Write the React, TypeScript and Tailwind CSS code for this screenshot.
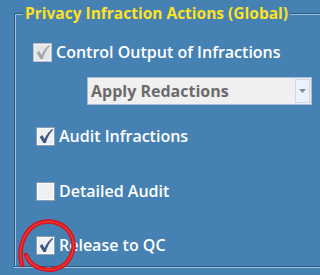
import * as React from "react";

const font = { fontFamily: '"Open Sans", "DejaVu Sans", sans-serif' };

interface CheckProps {
  checked: boolean;
  disabled?: boolean;
}

const CheckBox: React.FC<CheckProps> = ({ checked, disabled }) => {
  return (
    <div
      className={
        "w-[19px] h-[19px] shrink-0 border flex items-center justify-center " +
        (disabled
          ? "border-[#b9c2cc] bg-[#e4e6e8] shadow-[inset_0_0_0_1px_#f4f4f4]"
          : "border-[#8c9db2] bg-[#eef0f3] shadow-[inset_0_0_0_1px_#fbfbfb]")
      }
    >
      {checked && (
        <svg width="16" height="16" viewBox="0 0 15 15">
          <path
            d="M1.6 8.4 L4 6.6 L6.1 10.2 C8 6 10.5 3 13.8 0.8 L14.2 1.7 C11.3 4.6 8.9 8.6 7.3 14 L5.1 14 Z"
            fill={disabled ? "#a3a6aa" : "#3d5580"}
          />
        </svg>
      )}
    </div>
  );
};

interface RowProps {
  label: string;
  checked: boolean;
  disabled?: boolean;
  className?: string;
}

const CheckRow: React.FC<RowProps> = ({ label, checked, disabled, className }) => {
  return (
    <div className={"flex items-center gap-[4px] " + (className || "")}>
      <CheckBox checked={checked} disabled={disabled} />
      <span className="text-white font-semibold text-[16px] leading-[20px]">{label}</span>
    </div>
  );
};

export default function App() {
  return (
    <div
      className="relative w-[320px] h-[275px] overflow-hidden bg-[#4681b4]"
      style={font}
    >
      <fieldset className="ml-[14px] w-[330px] h-[267px] border border-r-0 border-[#2c5a85] shadow-[inset_1px_1px_0_#9fc0de,0_1px_0_#9fc0de] pl-[8px]">
        <legend className="px-[2px] bg-[#4681b4] text-[#ffe21f] font-bold text-[15.5px] leading-[26px]">
          Privacy Infraction Actions (Global)
        </legend>
        <div className="flex flex-col">
          <CheckRow
            label="Control Output of Infractions"
            checked
            disabled
            className="mt-[16px] ml-[10px]"
          />
          <div className="mt-[15px] ml-[64px] w-[225px] h-[28px] bg-[#f0f0f0] border border-[#a7bcd4] flex items-center pl-[3px] pr-[1px]">
            <span className="flex-1 text-[#6b6b6b] font-bold text-[16px] leading-[20px]">
              Apply Redactions
            </span>
            <div className="w-[15px] h-[24px] bg-[#eaf2fb] border border-[#c9d9ea] flex items-center justify-center">
              <svg width="7" height="4" viewBox="0 0 7 4">
                <path d="M0 0 H7 L3.5 4 Z" fill="#8a8a8a" />
              </svg>
            </div>
          </div>
          <CheckRow label="Audit Infractions" checked className="mt-[21px] ml-[13px]" />
          <CheckRow label="Detailed Audit" checked={false} className="mt-[35px] ml-[13px]" />
          <CheckRow label="Release to QC" checked className="mt-[34px] ml-[13px]" />
        </div>
      </fieldset>
      <svg
        className="absolute left-0 top-0 pointer-events-none"
        width="320"
        height="275"
        viewBox="0 0 320 275"
      >
        <path
          d="M22 265 C18 252, 22 233, 35 225 C48 218, 66 222, 72 237 C77 250, 69 266, 55 269 C43 272, 30 266, 26 255"
          fill="none"
          stroke="#d9141b"
          strokeWidth="4.5"
          strokeLinecap="round"
        />
        <path
          d="M22 265 C18 252, 22 233, 35 225 C48 218, 66 222, 72 237 C77 250, 69 266, 55 269 C43 272, 30 266, 26 255"
          fill="none"
          stroke="#ff5a5a"
          strokeWidth="1.2"
          strokeLinecap="round"
          opacity="0.6"
        />
      </svg>
    </div>
  );
}
